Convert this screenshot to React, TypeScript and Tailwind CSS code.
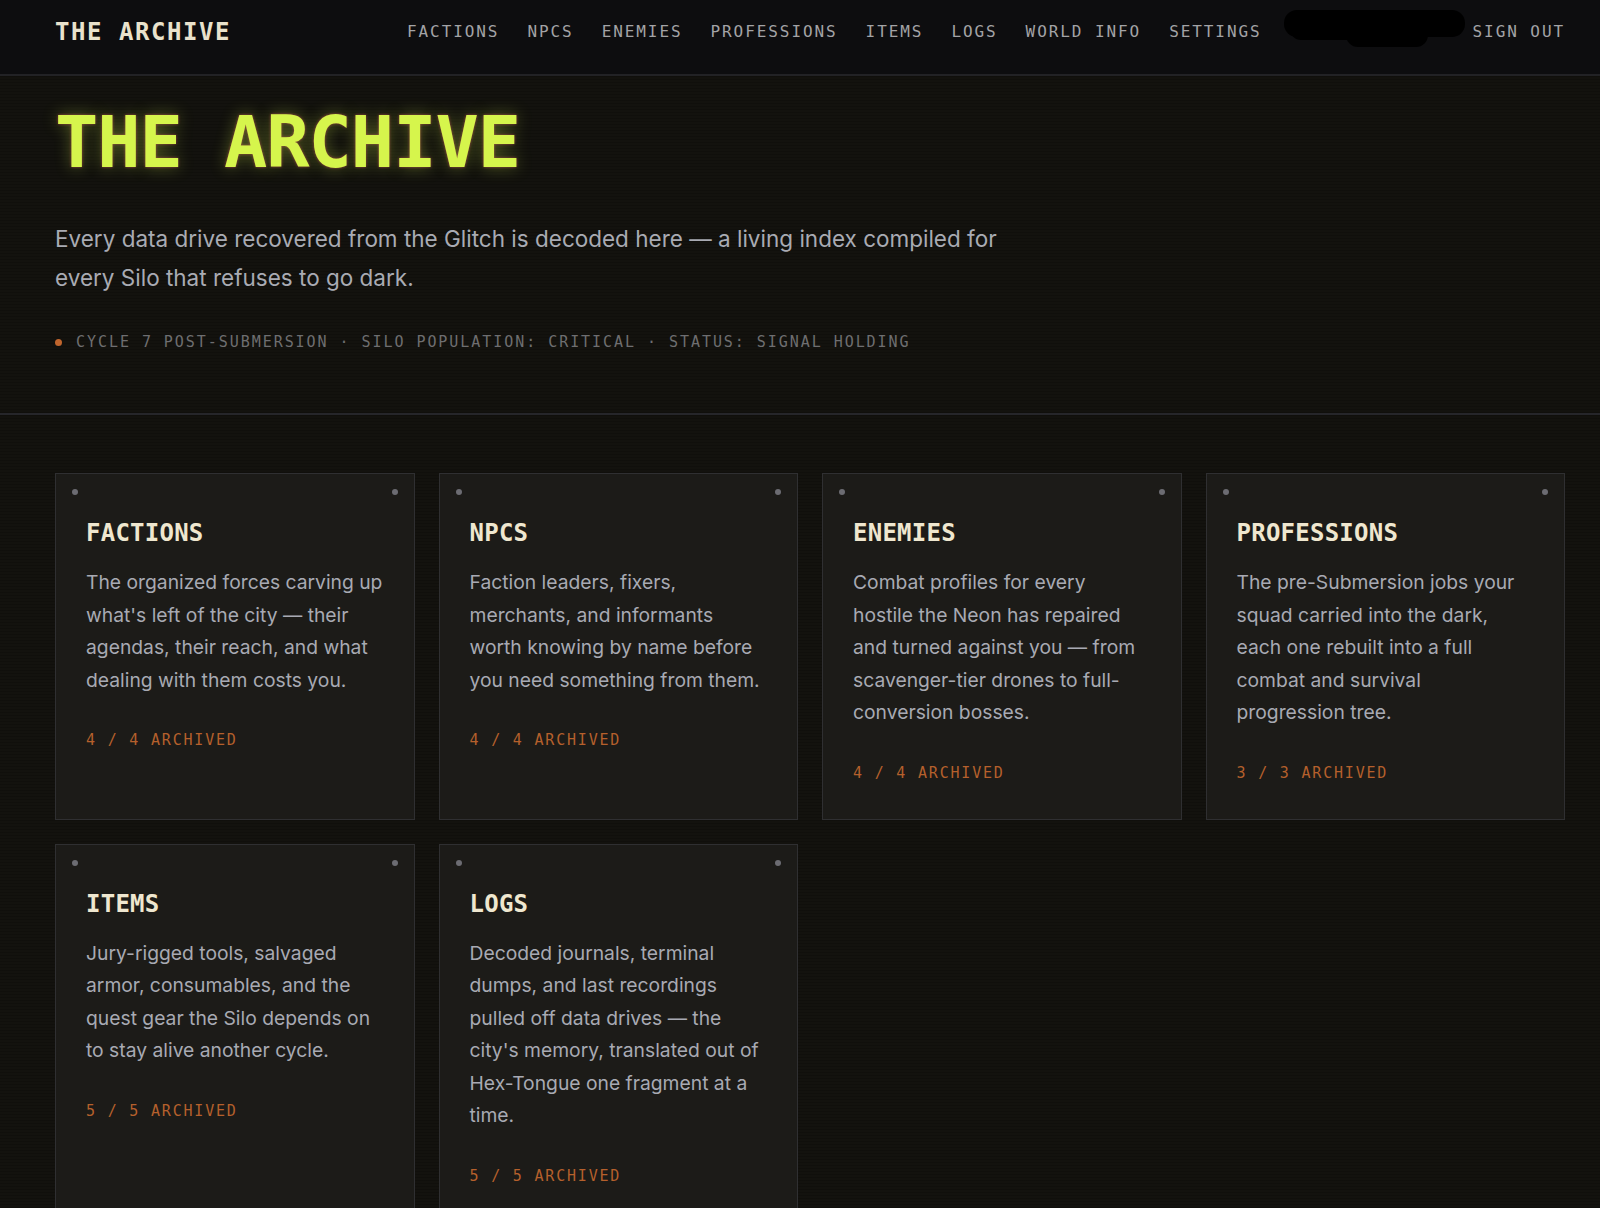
import React from "react";

const MONO = "font-['DejaVu_Sans_Mono','Liberation_Mono',monospace]";
const SANS = "font-['Inter','Noto_Sans',sans-serif]";

const navLinks = ["FACTIONS", "NPCS", "ENEMIES", "PROFESSIONS", "ITEMS", "LOGS", "WORLD INFO", "SETTINGS"];

type Section = {
  title: string;
  body: string;
  count: string;
};

const sections: Section[] = [
  {
    title: "FACTIONS",
    body: "The organized forces carving up what's left of the city \u2014 their agendas, their reach, and what dealing with them costs you.",
    count: "4 / 4 ARCHIVED",
  },
  {
    title: "NPCS",
    body: "Faction leaders, fixers, merchants, and informants worth knowing by name before you need something from them.",
    count: "4 / 4 ARCHIVED",
  },
  {
    title: "ENEMIES",
    body: "Combat profiles for every hostile the Neon has repaired and turned against you \u2014 from scavenger-tier drones to full-conversion bosses.",
    count: "4 / 4 ARCHIVED",
  },
  {
    title: "PROFESSIONS",
    body: "The pre-Submersion jobs your squad carried into the dark, each one rebuilt into a full combat and survival progression tree.",
    count: "3 / 3 ARCHIVED",
  },
  {
    title: "ITEMS",
    body: "Jury-rigged tools, salvaged armor, consumables, and the quest gear the Silo depends on to stay alive another cycle.",
    count: "5 / 5 ARCHIVED",
  },
  {
    title: "LOGS",
    body: "Decoded journals, terminal dumps, and last recordings pulled off data drives \u2014 the city's memory, translated out of Hex-Tongue one fragment at a time.",
    count: "5 / 5 ARCHIVED",
  },
];

const ArchiveCard: React.FC<{ section: Section }> = ({ section }) => (
  <div className="relative flex flex-col border border-[#2f2f31] bg-[#1c1b18] px-[30px] pt-[44px] pb-[36px]">
    {/* screw dots */}
    <span className="absolute left-[16px] top-[15px] h-[6px] w-[6px] rounded-full bg-[#6c6c72]" />
    <span className="absolute right-[16px] top-[15px] h-[6px] w-[6px] rounded-full bg-[#6c6c72]" />

    <h2 className={`${MONO} text-[24px] leading-[30px] font-bold tracking-[0.01em] text-[#efe7cf]`}>{section.title}</h2>
    <p className={`${SANS} mt-[18px] text-[19.3px] leading-[32.5px] text-[#a8aab3]`}>{section.body}</p>
    <div className={`${MONO} mt-[34px] text-[15px] leading-[20px] tracking-[0.12em] text-[#b5602c]`}>{section.count}</div>
  </div>
);

const App: React.FC = () => {
  return (
    <div className="min-h-screen bg-[#13120e] bg-[repeating-linear-gradient(0deg,rgba(0,0,0,0.18)_0px,rgba(0,0,0,0.18)_1px,transparent_1px,transparent_3px)]">
      {/* Top Nav */}
      <header className="flex h-[76px] items-center justify-between border-b-2 border-[#222225] bg-[#0d0d0f] pb-[10px] pl-[55px] pr-[35px]">
        <div className={`${MONO} text-[24px] font-bold tracking-[0.065em] text-[#e9e2cc]`}>THE ARCHIVE</div>
        <nav className={`${MONO} flex items-center gap-[28px] text-[16px] tracking-[0.12em] text-[#a3a3a6]`}>
          {navLinks.map((link) => (
            <a key={link} className="whitespace-nowrap">{link}</a>
          ))}
          <span className="relative -ml-[6px] -mr-[20px] h-[20px] w-[181px]">
            <svg className="absolute -top-[12px] left-0" width="181" height="40" viewBox="0 0 181 40">
              <rect x="0" y="0" width="181" height="27" rx="13" fill="#000" />
              <rect x="6" y="8" width="70" height="22" rx="11" fill="#000" />
              <rect x="62" y="12" width="82" height="25" rx="12" fill="#000" />
            </svg>
          </span>
          <a className="whitespace-nowrap">SIGN OUT</a>
        </nav>
      </header>

      {/* Hero */}
      <section className="border-b-2 border-[#26262a] pl-[55px] pr-[35px] pt-[30px] pb-[61px]">
        <h1
          className={`${MONO} text-[72px] leading-none font-bold tracking-[-0.015em] text-[#d6f54c] [text-shadow:0_0_16px_rgba(214,245,76,0.35),0_0_3px_rgba(255,70,110,0.55)]`}
        >
          THE ARCHIVE
        </h1>
        <p className={`${SANS} mt-[41px] max-w-[965px] text-[22.5px] leading-[39px] text-[#a9abb3]`}>
          Every data drive recovered from the Glitch is decoded here — a living index compiled for every Silo that refuses to go dark.
        </p>
        <div className={`${MONO} mt-[35px] flex items-center gap-[14px] text-[15px] leading-[20px] tracking-[0.13em] text-[#6e6e70]`}>
          <span className="h-[7px] w-[7px] rounded-full bg-[#c0652d]" />
          <span>CYCLE 7 POST-SUBMERSION · SILO POPULATION: CRITICAL · STATUS: SIGNAL HOLDING</span>
        </div>
      </section>

      {/* Cards */}
      <main className="grid grid-cols-4 gap-[24px] pl-[55px] pr-[35px] pt-[58px] pb-[60px]">
        {sections.map((s) => (
          <ArchiveCard key={s.title} section={s} />
        ))}
      </main>
    </div>
  );
};

export default App;
